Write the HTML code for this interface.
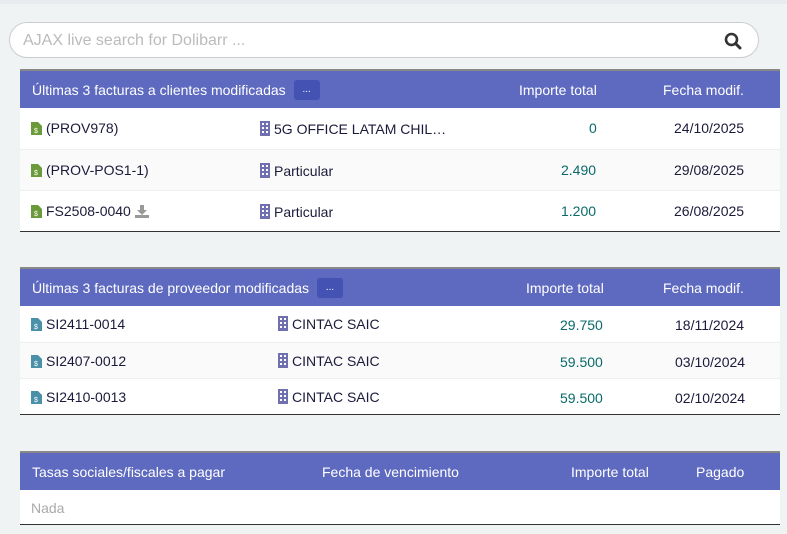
<!DOCTYPE html>
<html><head><meta charset="utf-8">
<style>
*{box-sizing:border-box;margin:0;padding:0}
body{width:787px;height:534px;background:#f0f3f4;font-family:"Liberation Sans",sans-serif;font-size:14px;color:#1a1a3a;position:relative;overflow:hidden}
.search{position:absolute;left:9px;top:22px;width:750px;height:36px;background:#fff;border:1px solid #ccc;border-radius:18px}
.search span{position:absolute;left:13px;top:9px;font-size:16px;color:#bbb}
.search svg{position:absolute;right:16px;top:9px}
.tbl{position:absolute;left:20px;width:760px;background:#fff;border-bottom:1px solid #333}
.hd{height:39px;background:#5e6abf;border-top:2px solid #888;color:#fff;position:relative}
.hd span{position:absolute;top:11px}
.btn{display:inline-block;background:#4452b3;border-radius:3px;width:26px;height:20px;vertical-align:middle;text-align:center;font-size:10px;line-height:20px;margin-left:8px;margin-top:-2px}
.row{position:relative;border-top:1px solid #eee}
.row span{position:absolute}
.alt{background:#fafafa}
.num{color:#0a6a6a}
.ic{display:inline-block;vertical-align:-2px;margin-right:4px}
</style></head><body>
<div style="position:absolute;left:0;top:0;width:787px;height:4px;background:#e9ecee"></div>
<div class="search"><span>AJAX live search for Dolibarr ...</span>
<svg width="18" height="18" viewBox="0 0 18 18"><circle cx="7.5" cy="7.5" r="5.5" fill="none" stroke="#333" stroke-width="2.6"/><path d="M11.5 11.5L16 16" stroke="#333" stroke-width="3" stroke-linecap="round"/></svg></div>

<div class="tbl" style="top:69px">
<div class="hd"><span style="left:12px">Últimas 3 facturas a clientes modificadas<span class="btn" style="position:static">...</span></span><span style="left:499px">Importe total</span><span style="left:643px">Fecha modif.</span></div>
<div class="row" style="height:41px;border-top:0"><span style="left:11px;top:12px"><svg class="ic" width="11" height="13" viewBox="0 0 11 13"><path d="M0 0h7l4 4v9H0z" fill="#6a9a3a"/><text x="3" y="11" font-size="7" fill="#fff">$</text></svg>(PROV978)</span><span style="left:240px;top:13px"><svg class="ic" width="10" height="15"><rect width="10" height="15" fill="#7070b0"/><rect x="2" y="2" width="2" height="2" fill="#fff"/><rect x="6" y="2" width="2" height="2" fill="#fff"/><rect x="2" y="6" width="2" height="2" fill="#fff"/><rect x="6" y="6" width="2" height="2" fill="#fff"/><rect x="2" y="10" width="2" height="2" fill="#fff"/><rect x="6" y="10" width="2" height="2" fill="#fff"/></svg>5G OFFICE LATAM CHIL…</span><span class="num" style="left:569px;top:12px">0</span><span style="left:654px;top:12px">24/10/2025</span></div>
<div class="row alt" style="height:41px"><span style="left:11px;top:12px"><svg class="ic" width="11" height="13" viewBox="0 0 11 13"><path d="M0 0h7l4 4v9H0z" fill="#6a9a3a"/><text x="3" y="11" font-size="7" fill="#fff">$</text></svg>(PROV-POS1-1)</span><span style="left:240px;top:13px"><svg class="ic" width="10" height="15"><rect width="10" height="15" fill="#7070b0"/><rect x="2" y="2" width="2" height="2" fill="#fff"/><rect x="6" y="2" width="2" height="2" fill="#fff"/><rect x="2" y="6" width="2" height="2" fill="#fff"/><rect x="6" y="6" width="2" height="2" fill="#fff"/><rect x="2" y="10" width="2" height="2" fill="#fff"/><rect x="6" y="10" width="2" height="2" fill="#fff"/></svg>Particular</span><span class="num" style="left:541px;top:12px">2.490</span><span style="left:654px;top:12px">29/08/2025</span></div>
<div class="row" style="height:41px"><span style="left:11px;top:12px"><svg class="ic" width="11" height="13" viewBox="0 0 11 13"><path d="M0 0h7l4 4v9H0z" fill="#6a9a3a"/><text x="3" y="11" font-size="7" fill="#fff">$</text></svg>FS2508-0040 <svg width="14" height="13" viewBox="0 0 14 13" style="vertical-align:-2px"><path d="M5 0h4v5h3l-5 5-5-5h3z M0 10h14v3H0z" fill="#999"/></svg></span><span style="left:240px;top:13px"><svg class="ic" width="10" height="15"><rect width="10" height="15" fill="#7070b0"/><rect x="2" y="2" width="2" height="2" fill="#fff"/><rect x="6" y="2" width="2" height="2" fill="#fff"/><rect x="2" y="6" width="2" height="2" fill="#fff"/><rect x="6" y="6" width="2" height="2" fill="#fff"/><rect x="2" y="10" width="2" height="2" fill="#fff"/><rect x="6" y="10" width="2" height="2" fill="#fff"/></svg>Particular</span><span class="num" style="left:541px;top:12px">1.200</span><span style="left:654px;top:12px">26/08/2025</span></div>
</div>

<div class="tbl" style="top:267px">
<div class="hd"><span style="left:12px">Últimas 3 facturas de proveedor modificadas<span class="btn" style="position:static">...</span></span><span style="left:506px">Importe total</span><span style="left:643px">Fecha modif.</span></div>
<div class="row" style="height:36px;border-top:0"><span style="left:11px;top:10px"><svg class="ic" width="11" height="13" viewBox="0 0 11 13"><path d="M0 0h7l4 4v9H0z" fill="#4a90a8"/><text x="3" y="11" font-size="7" fill="#fff">$</text></svg>SI2411-0014</span><span style="left:258px;top:10px"><svg class="ic" width="10" height="15"><rect width="10" height="15" fill="#7070b0"/><rect x="2" y="2" width="2" height="2" fill="#fff"/><rect x="6" y="2" width="2" height="2" fill="#fff"/><rect x="2" y="6" width="2" height="2" fill="#fff"/><rect x="6" y="6" width="2" height="2" fill="#fff"/><rect x="2" y="10" width="2" height="2" fill="#fff"/><rect x="6" y="10" width="2" height="2" fill="#fff"/></svg>CINTAC SAIC</span><span class="num" style="left:540px;top:11px">29.750</span><span style="left:655px;top:11px">18/11/2024</span></div>
<div class="row alt" style="height:36px"><span style="left:11px;top:10px"><svg class="ic" width="11" height="13" viewBox="0 0 11 13"><path d="M0 0h7l4 4v9H0z" fill="#4a90a8"/><text x="3" y="11" font-size="7" fill="#fff">$</text></svg>SI2407-0012</span><span style="left:258px;top:10px"><svg class="ic" width="10" height="15"><rect width="10" height="15" fill="#7070b0"/><rect x="2" y="2" width="2" height="2" fill="#fff"/><rect x="6" y="2" width="2" height="2" fill="#fff"/><rect x="2" y="6" width="2" height="2" fill="#fff"/><rect x="6" y="6" width="2" height="2" fill="#fff"/><rect x="2" y="10" width="2" height="2" fill="#fff"/><rect x="6" y="10" width="2" height="2" fill="#fff"/></svg>CINTAC SAIC</span><span class="num" style="left:540px;top:11px">59.500</span><span style="left:655px;top:11px">03/10/2024</span></div>
<div class="row" style="height:36px"><span style="left:11px;top:10px"><svg class="ic" width="11" height="13" viewBox="0 0 11 13"><path d="M0 0h7l4 4v9H0z" fill="#4a90a8"/><text x="3" y="11" font-size="7" fill="#fff">$</text></svg>SI2410-0013</span><span style="left:258px;top:10px"><svg class="ic" width="10" height="15"><rect width="10" height="15" fill="#7070b0"/><rect x="2" y="2" width="2" height="2" fill="#fff"/><rect x="6" y="2" width="2" height="2" fill="#fff"/><rect x="2" y="6" width="2" height="2" fill="#fff"/><rect x="6" y="6" width="2" height="2" fill="#fff"/><rect x="2" y="10" width="2" height="2" fill="#fff"/><rect x="6" y="10" width="2" height="2" fill="#fff"/></svg>CINTAC SAIC</span><span class="num" style="left:540px;top:11px">59.500</span><span style="left:655px;top:11px">02/10/2024</span></div>
</div>

<div class="tbl" style="top:451px">
<div class="hd"><span style="left:12px">Tasas sociales/fiscales a pagar</span><span style="left:302px">Fecha de vencimiento</span><span style="left:551px">Importe total</span><span style="left:676px">Pagado</span></div>
<div class="row" style="height:34px;border-top:0"><span style="left:11px;top:10px;color:#aaa">Nada</span></div>
</div>
</body></html>
